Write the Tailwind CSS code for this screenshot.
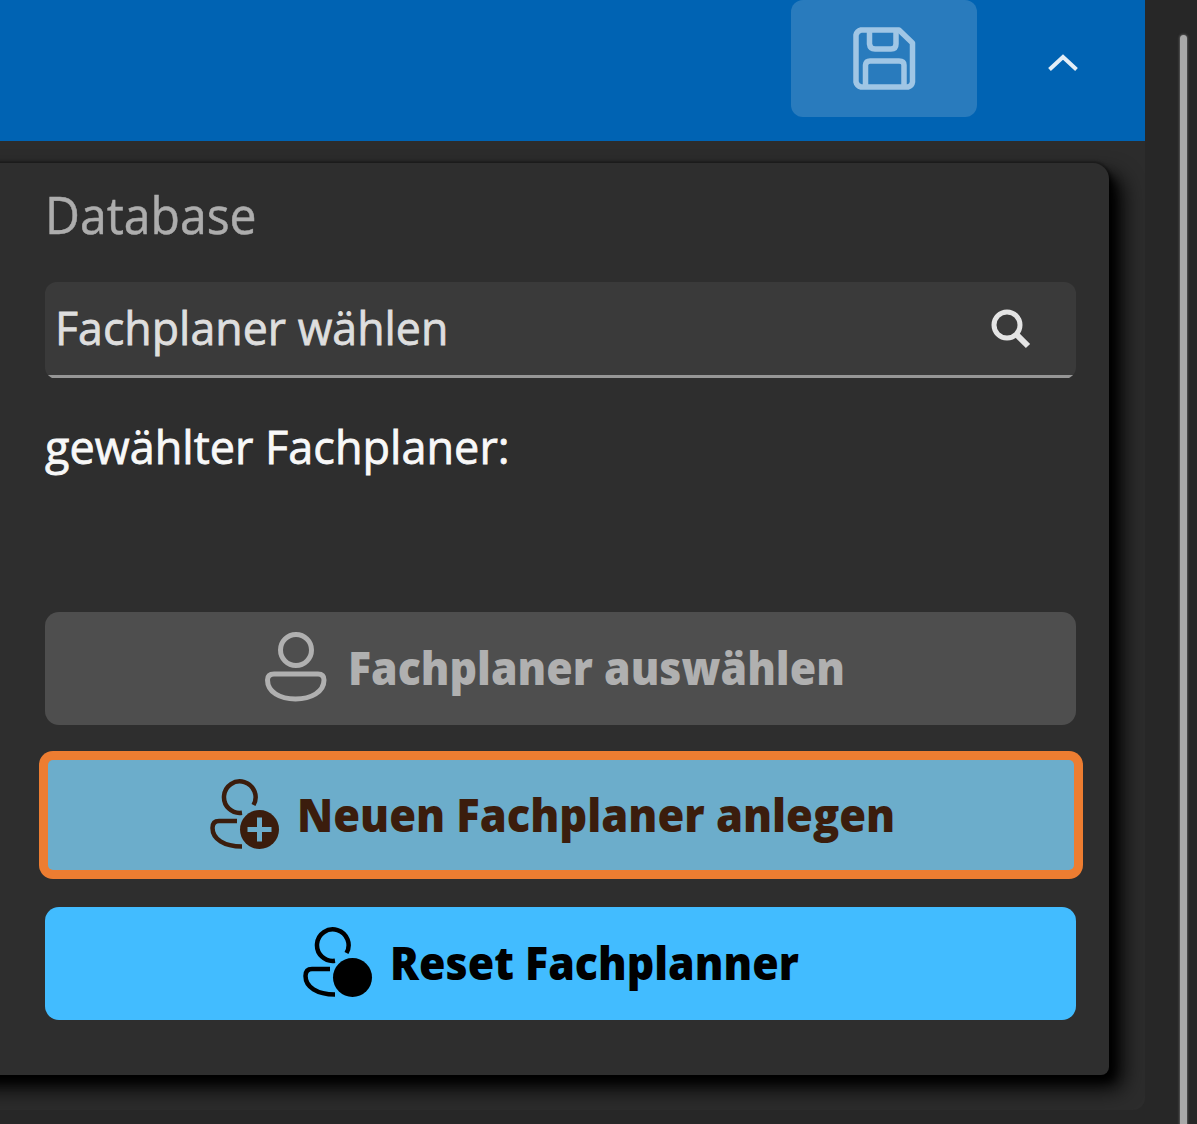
<!DOCTYPE html>
<html lang="de">
<head>
<meta charset="utf-8">
<title>Fachplaner</title>
<script src="https://cdn.jsdelivr.net/npm/@tailwindcss/browser@4"></script>
</head>
<body class="flex h-[1124px] w-[1197px] overflow-hidden bg-[#272727] font-['Open_Sans','Noto_Sans',sans-serif]">
  <main class="h-[1110px] w-[1145px] shrink-0 overflow-hidden rounded-br-xl bg-[#2c2c2c]">
    <header class="flex h-[141px] items-start justify-end bg-[#0063b3]">
      <button class="flex h-[117px] w-[186px] justify-center rounded-xl bg-[#297bbd] pt-[27px]">
        <svg class="h-[63px] w-[63px]" viewBox="0 0 63 63" fill="none" stroke="#a0c6e5" stroke-width="5.5" stroke-linejoin="round">
          <path d="M8 3H46L59.500 16V55Q59 59 55 60H8Q4 59 3 55V8Q4 4 8 3Z"/>
          <path d="M16.500 3V17Q17 22 22 22H38Q43 22 43 17V3"/>
          <path d="M12.500 60V38Q13 34 17 34H46Q51 34 51 38V60"/>
        </svg>
      </button>
      <button class="mt-[53px] mr-[66px] ml-[69px]">
        <svg class="h-5 w-[33px]" viewBox="0 0 33 20" fill="none" stroke="#e3eef7" stroke-width="4"><path d="M3.500 16.500L17 4L30.500 16.500"/></svg>
      </button>
    </header>
    <section class="-ml-[60px] mt-[22px] flex h-[912px] w-[1169px] flex-col rounded-tr-[16px] rounded-br-[8px] bg-[#2e2e2e] pr-[33px] pl-[105px] shadow-[7px_8px_10px_-2px_#000,13px_13px_22px_0_#000,0_0_2px_2px_#202020]">
      <h1 class="mt-[13px] h-[76px] w-[211px] origin-left scale-x-[0.925] text-[52px] leading-[76px] whitespace-nowrap text-[#adadad] [-webkit-text-stroke:0.5px]">Database</h1>
      <div class="mt-[30px] flex h-[97px] items-center overflow-hidden rounded-xl bg-[linear-gradient(to_top,#2e2e2e_1px,#969696_1px,#969696_4px,#3a3a3a_4px)] pb-[8px] pl-[10px]">
        <span class="w-[392px] origin-left scale-x-[0.972] text-[46px] leading-[68px] whitespace-nowrap text-[#dedede] [-webkit-text-stroke:0.8px]">Fachplaner wählen</span>
        <svg class="mt-[5px] mr-[44px] ml-auto h-[42px] w-[42px]" viewBox="0 0 42 42" fill="none" stroke="#e4e4e4" stroke-width="5"><circle cx="17" cy="17" r="13"/><path d="M26 26L38 38" stroke-width="6"/></svg>
      </div>
      <p class="mt-[33px] h-[68px] w-[463px] origin-left scale-x-[0.979] text-[46px] leading-[68px] whitespace-nowrap text-[#f8f8f8] [-webkit-text-stroke:0.8px]">gewählter Fachplaner:</p>
      <button class="mt-[132px] flex h-[113px] shrink-0 items-center rounded-[14px] bg-[#4e4e4e] pl-[219px] text-[#b0b0b0]">
        <svg class="-mt-1 h-[72px] w-[64px]" viewBox="0 0 64 72" fill="none" stroke="currentColor" stroke-width="5"><circle cx="32" cy="19" r="15.500"/><path d="M10 43H54Q60 43 60 49C60 61 47 68 31.500 68S3.500 61 3.500 49Q3.500 43 10 43Z"/></svg>
        <span class="-mt-1 ml-[20px] w-[496px] origin-left scale-x-[0.931] text-left text-[46px] leading-[68px] font-extrabold whitespace-nowrap">Fachplaner auswählen</span>
      </button>
      <div class="mt-[26px] -mr-[7px] -ml-[6px] h-[128px] shrink-0 rounded-[14px] bg-[#ed7d31] p-[9px]">
        <button class="flex h-[110px] w-full items-center rounded-[5px] bg-[#6cadcb] pl-[161px] text-[#3b1d0d]">
          <svg class="h-[72px] w-[72px]" viewBox="0 0 72 72" fill="none" stroke="currentColor" stroke-width="4.500"><path d="M33 33.800A15.800 15.800 0 1 1 44.500 26"/><path d="M28 42H10Q3.500 42 3.500 49C3.500 60 15 67.500 33 67.500"/><circle cx="50.500" cy="50.500" r="19.500" fill="currentColor" stroke="none"/><path d="M50.500 38.500V62.500M38.500 50.500H62.500" stroke="#6cadcb" stroke-width="5"/></svg>
          <span class="-mt-0.5 ml-[16px] w-[597px] origin-left scale-x-[0.944] text-left text-[46px] leading-[68px] font-extrabold whitespace-nowrap">Neuen Fachplaner anlegen</span>
        </button>
      </div>
      <button class="mt-[28px] flex h-[113px] shrink-0 items-center rounded-[14px] bg-[#42bcff] pl-[257px] text-black">
        <svg class="-mt-[2px] h-[72px] w-[72px]" viewBox="0 0 72 72" fill="none" stroke="currentColor" stroke-width="4.500"><path d="M33 33.800A15.800 15.800 0 1 1 44.500 26"/><path d="M28 42H10Q3.500 42 3.500 49C3.500 60 15 67.500 33 67.500"/><circle cx="50.500" cy="50.500" r="19.500" fill="currentColor" stroke="none"/></svg>
        <span class="-mt-1 ml-[16px] w-[408px] origin-left scale-x-[0.932] text-left text-[46px] leading-[68px] font-extrabold whitespace-nowrap">Reset Fachplanner</span>
      </button>
    </section>
  </main>
  <div class="mt-[35px] ml-[35px] h-[1100px] w-[7px] rounded-t-sm bg-[#a9a9a9] shadow-[0_0_2px_1px_#555]"></div>
</body>
</html>
